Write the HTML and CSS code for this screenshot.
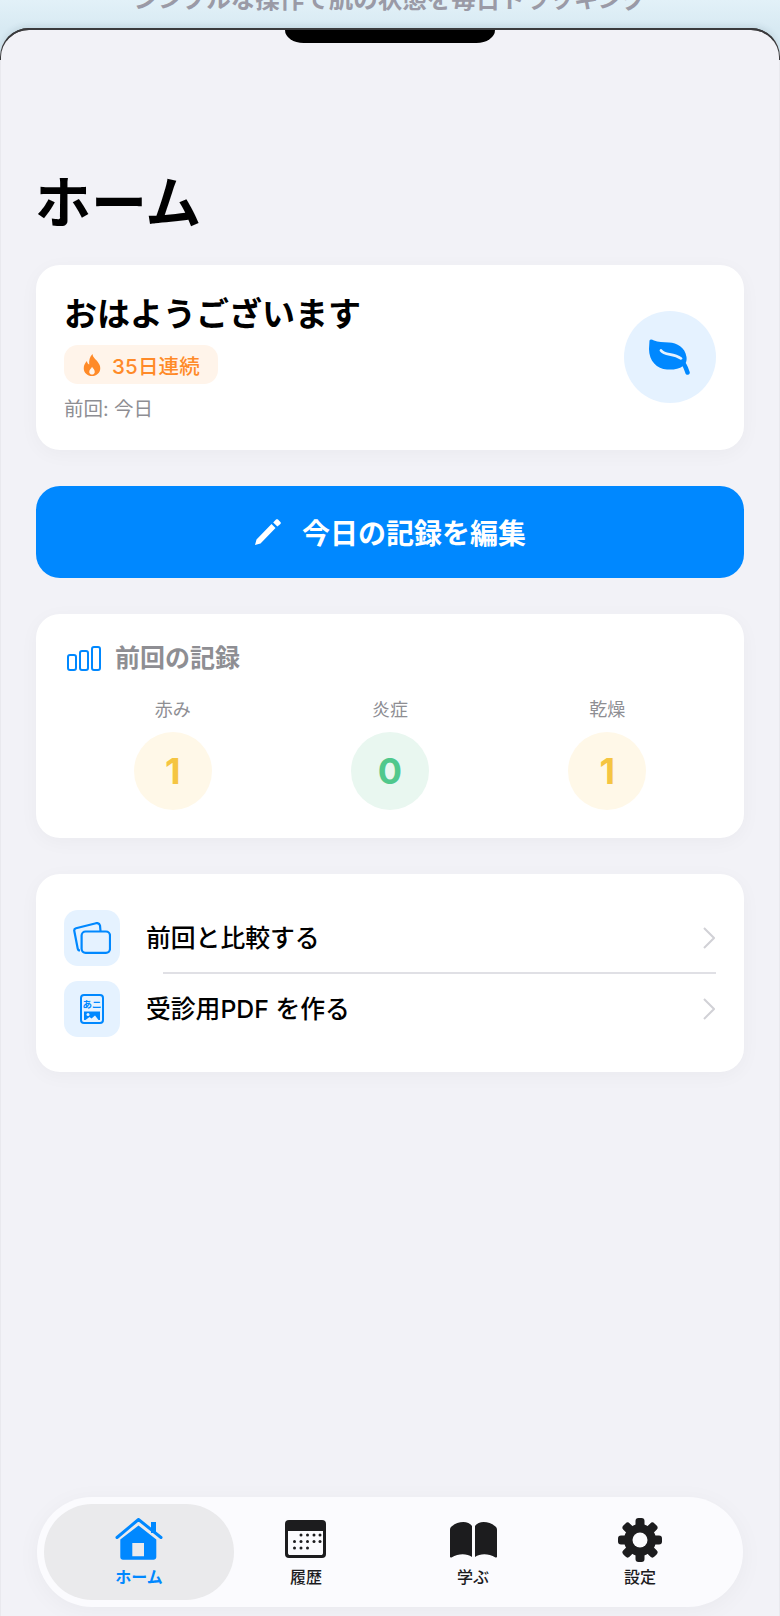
FILE: index.html
```html
<!DOCTYPE html>
<html lang="ja">
<head>
<meta charset="utf-8">
<title>ホーム</title>
<link rel="stylesheet" href="styles.css">
</head>
<body>
<div class="stage">
  <p class="caption">シンプルな操作で肌の状態を毎日トラッキング</p>
  <div class="phone">
    <div class="notch"></div>
    <h1 class="page-title">ホーム</h1>
    <main class="content">
      <section class="card greeting">
        <div class="greeting-text">
          <h2 class="greeting-title">おはようございます</h2>
          <div class="streak">
            <svg class="streak-icon" viewBox="0 0 18 24"><path fill="#FF8A28" fill-rule="evenodd" d="M9.500 0C10 4 13 5.500 15.500 9C17 11 18 13 18 15.500C18 20.500 14 24 9 24C4 24 0 20.500 0 15.500C0 12 1.500 9.500 3.500 7.500C3.700 9.500 4.500 10.800 6 11.500C5.500 7 6.500 3 9.500 0ZM9 14C8.500 16 6 17 6 19.500C6 21.200 7.300 22.300 9 22.300C10.700 22.300 12 21.200 12 19.500C12 17 10 16 9 14Z"/></svg>
            <span class="streak-text">35日連続</span>
          </div>
          <p class="last-visit">前回: 今日</p>
        </div>
        <div class="leaf-badge">
          <svg class="leaf-icon" viewBox="0 0 42 36">
            <path fill="#0088FF" d="M.5 1.500C1.500-.2 3 .6 5 1.400C9 3 14 3 20 3.500C28 4 36 8 37.500 18C38 22 37 25 34 27C30 30 24 31 18 30.500C8 30 0 22 0 10Z"/>
            <path fill="none" stroke="#E5F2FF" stroke-width="2.800" stroke-linecap="round" d="M12 11.500C16 17 24 13.500 32 19.500"/>
            <path fill="none" stroke="#0088FF" stroke-width="4.500" stroke-linecap="round" d="M33 23C36 25.500 37 29 38.500 33.500"/>
          </svg>
        </div>
      </section>

      <button class="primary-action" type="button">
        <svg class="pencil-icon" viewBox="0 0 28 28"><path fill="#fff" d="M1 27L2.500 21.500L17.500 6L21.500 10L6.500 25.500ZM19.200 4.400L22 1.600C22.600 1 23.400 1 24 1.600L26.400 4C27 4.600 27 5.400 26.400 6L23.400 8.600Z"/></svg>
        <span>今日の記録を編集</span>
      </button>

      <section class="card record">
        <header class="record-head">
          <svg class="bars-icon" viewBox="0 0 34 25" fill="none" stroke="#0088FF" stroke-width="2"><rect x="1" y="9" width="8" height="15" rx="2"/><rect x="13" y="5" width="8" height="19" rx="2"/><rect x="25" y="1" width="8" height="23" rx="2"/></svg>
          <h3 class="record-title">前回の記録</h3>
        </header>
        <div class="metrics">
          <div class="metric">
            <span class="metric-label">赤み</span>
            <span class="metric-value level-mid">1</span>
          </div>
          <div class="metric">
            <span class="metric-label">炎症</span>
            <span class="metric-value level-low">0</span>
          </div>
          <div class="metric">
            <span class="metric-label">乾燥</span>
            <span class="metric-value level-mid">1</span>
          </div>
        </div>
      </section>

      <section class="card links">
        <a class="link-row">
          <span class="link-tile">
            <svg class="link-icon" viewBox="0 0 38 32" fill="none" stroke="#0088FF" stroke-width="2.200"><path d="M7 28.500C5.500 28.500 5 28 4.700 26.500L1.300 9C1 7.500 1.800 6.500 3 6.200L23 1.200C25 .8 26.500 1.500 27 3.500L27.500 9"/><rect x="8.600" y="9.500" width="28.400" height="21.300" rx="4"/></svg>
          </span>
          <span class="link-label">前回と比較する</span>
          <svg class="chevron" viewBox="0 0 12 22" fill="none" stroke="#D1D1D6" stroke-width="2"><path d="M1 1l10 10L1 21"/></svg>
        </a>
        <div class="link-divider"></div>
        <a class="link-row">
          <span class="link-tile">
            <svg class="doc-icon" viewBox="0 0 24 30">
              <rect x="1" y="1" width="22" height="28" rx="3" fill="none" stroke="#0088FF" stroke-width="2"/>
              <text class="doc-text" x="12" y="14">あニ</text>
              <path fill="#0088FF" d="M4 17.500h16V26H4z"/>
              <circle cx="8" cy="20.500" r="1.500" fill="#E5F2FF"/>
              <path fill="#E5F2FF" d="M5.500 26l4-3 2 1.500 3.500-3 3.500 4.500z"/>
            </svg>
          </span>
          <span class="link-label">受診用PDF を作る</span>
          <svg class="chevron" viewBox="0 0 12 22" fill="none" stroke="#D1D1D6" stroke-width="2"><path d="M1 1l10 10L1 21"/></svg>
        </a>
      </section>
    </main>

    <nav class="tabbar">
      <a class="tab tab-active">
        <svg class="tab-icon home-icon" viewBox="0 0 48 44">
          <path fill="#0088FF" fill-rule="evenodd" d="M23.500 7.500L41.300 21.500V39C41.300 40.700 40 41.800 38.500 41.800H8C6.500 41.800 5.300 40.700 5.300 39V21.500ZM17.300 25V38.300H29V25Z"/>
          <path fill="none" stroke="#0088FF" stroke-width="3" stroke-linecap="round" stroke-linejoin="round" d="M2 19.500L23.500 1.500L46 19.500"/>
          <rect x="36" y="4" width="5" height="11" fill="#0088FF"/>
        </svg>
        <span class="tab-label">ホーム</span>
      </a>
      <a class="tab">
        <svg class="tab-icon calendar-icon" viewBox="0 0 41 38">
          <rect width="41" height="38" rx="4" fill="#1C1C1E"/>
          <path fill="#FBFBFE" d="M3 11H38V33C38 34.500 37 35 36 35H5C4 35 3 34.500 3 33Z"/>
          <g fill="#1C1C1E">
            <circle cx="16" cy="15" r="1.500"/><circle cx="22.500" cy="15" r="1.500"/><circle cx="29" cy="15" r="1.500"/><circle cx="35" cy="15" r="1.500"/>
            <circle cx="9.500" cy="21.500" r="1.500"/><circle cx="16" cy="21.500" r="1.500"/><circle cx="22.500" cy="21.500" r="1.500"/><circle cx="29" cy="21.500" r="1.500"/><circle cx="35" cy="21.500" r="1.500"/>
            <circle cx="9.500" cy="28" r="1.500"/><circle cx="16" cy="28" r="1.500"/><circle cx="22.500" cy="28" r="1.500"/>
          </g>
        </svg>
        <span class="tab-label">履歴</span>
      </a>
      <a class="tab">
        <svg class="tab-icon book-icon" viewBox="0 0 47 37"><path fill="#1C1C1E" d="M22 5V36C17 32.500 9 32 1.500 36.500C.7 36.800 0 36.300 0 35.500V9C0 7.500.4 6.500 1.500 5.500C7 .5 18-1 22 5ZM25 5V36C30 32.500 38 32 45.500 36.500C46.300 36.800 47 36.300 47 35.500V9C47 7.500 46.600 6.500 45.500 5.500C40 .5 29-1 25 5Z"/></svg>
        <span class="tab-label">学ぶ</span>
      </a>
      <a class="tab">
        <svg class="tab-icon gear-icon" viewBox="0 0 44 44">
          <g fill="#1C1C1E">
            <circle cx="22" cy="22" r="16"/>
            <rect x="17.500" y="0" width="9" height="44" rx="3"/>
            <rect x="17.500" y="0" width="9" height="44" rx="3" transform="rotate(45 22 22)"/>
            <rect x="17.500" y="0" width="9" height="44" rx="3" transform="rotate(90 22 22)"/>
            <rect x="17.500" y="0" width="9" height="44" rx="3" transform="rotate(135 22 22)"/>
          </g>
          <circle cx="22" cy="22" r="7.500" fill="#FBFBFE"/>
        </svg>
        <span class="tab-label">設定</span>
      </a>
    </nav>
  </div>
</div>
</body>
</html>
```
FILE: styles.css
```css
* { box-sizing: border-box; }

html, body {
  margin: 0;
  height: 1616px;
  overflow: hidden;
}

body {
  font-family: Inter, "Noto Sans CJK JP", sans-serif;
  color: #000;
  background: #fff;
}

.stage {
  height: 1616px;
  display: flex;
  flex-direction: column;
  overflow: hidden;
  background: linear-gradient(180deg, #E2F1F8 0, #D8EAF3 28px, #D8EAF3 100%);
}

.caption {
  margin: -17px 0 0;
  height: 45px;
  flex: none;
  text-align: center;
  font-size: 24.500px;
  line-height: 32px;
  font-weight: 700;
  color: #9A9AA6;
}

.phone {
  flex: 1;
  display: flex;
  flex-direction: column;
  position: relative;
  padding: 141px 35px 9px;
  background: #F2F2F7;
  border: 1px solid #E9E9EE;
  border-top: 2px solid #3A3A3C;
  border-bottom: 0;
  border-radius: 29px 29px 0 0;
  box-shadow: 0 -2px 6px rgba(40, 70, 90, .12);
}

.phone::before,
.phone::after {
  content: "";
  position: absolute;
  top: -2px;
  width: 30px;
  height: 30px;
  border-top: 2px solid #3A3A3C;
}

.phone::before {
  left: -1px;
  border-left: 1.500px solid #3A3A3C;
  border-top-left-radius: 29px;
}

.phone::after {
  right: -1px;
  border-right: 1.500px solid #3A3A3C;
  border-top-right-radius: 29px;
}

.notch {
  position: absolute;
  top: 0;
  left: 284px;
  width: 210px;
  height: 13px;
  background: #000;
  border-radius: 0 0 20px 20px / 0 0 14px 14px;
}

.page-title {
  margin: 0 0 30px -1px;
  font-size: 56px;
  line-height: 64px;
  font-weight: 700;
}

.content {
  display: flex;
  flex-direction: column;
  gap: 36px;
}

.card {
  background: #fff;
  border-radius: 24px;
  box-shadow: 0 4px 20px rgba(0, 0, 0, .035);
}

.greeting {
  height: 185px;
  padding: 26px 28px 0;
  display: flex;
  justify-content: space-between;
}

.greeting-title {
  margin: 0 0 8px;
  font-size: 33px;
  line-height: 46px;
  font-weight: 600;
}

.streak {
  display: inline-flex;
  align-items: center;
  gap: 11px;
  height: 39px;
  width: 154px;
  padding-left: 19px;
  border-radius: 14px;
  background: #FFF4EA;
}

.streak-icon {
  width: 18px;
  height: 22px;
}

.streak-text {
  font-size: 20.500px;
  letter-spacing: .2px;
  font-weight: 500;
  color: #FF8A28;
}

.last-visit {
  margin: 12px 0 0;
  font-size: 19.500px;
  line-height: 26px;
  color: #8E8E93;
}

.leaf-badge {
  width: 92px;
  height: 92px;
  margin-top: 20px;
  border-radius: 50%;
  background: #E5F2FF;
  display: flex;
  align-items: center;
  justify-content: center;
}

.leaf-icon {
  width: 42px;
  height: 36px;
}

.primary-action {
  height: 92px;
  border: 0;
  border-radius: 24px;
  background: #0088FF;
  display: flex;
  align-items: center;
  justify-content: center;
  gap: 20px;
  font: inherit;
  font-size: 28px;
  font-weight: 600;
  color: #fff;
}

.pencil-icon {
  width: 28px;
  height: 28px;
}

.record {
  height: 224px;
  padding: 26px 28px 0;
}

.record-head {
  display: flex;
  align-items: center;
  gap: 14px;
  height: 36px;
}

.bars-icon {
  width: 34px;
  height: 25px;
  margin-left: 3px;
}

.record-title {
  margin: 0;
  font-size: 25px;
  line-height: 36px;
  font-weight: 700;
  color: #8E8E93;
}

.metrics {
  display: grid;
  grid-template-columns: repeat(3, 1fr);
  margin-top: 22px;
}

.metric {
  display: flex;
  flex-direction: column;
  align-items: center;
}

.metric-label {
  font-size: 18px;
  line-height: 24px;
  color: #8E8E93;
}

.metric-value {
  width: 78px;
  height: 78px;
  margin-top: 10px;
  border-radius: 50%;
  display: flex;
  align-items: center;
  justify-content: center;
  font-size: 36px;
  font-weight: 700;
}

.level-mid {
  background: #FFF8E8;
  color: #F5C542;
}

.level-low {
  background: #E9F7F0;
  color: #50C88C;
}

.links {
  height: 198px;
  padding: 35px 29px 0 28px;
}

.link-row {
  display: flex;
  align-items: center;
  height: 57px;
}

.link-tile {
  width: 56px;
  height: 56px;
  border-radius: 14px;
  background: #E5F2FF;
  display: flex;
  align-items: center;
  justify-content: center;
  flex: none;
}

.link-icon {
  width: 38px;
  height: 32px;
}

.doc-icon {
  width: 24px;
  height: 30px;
}

.doc-text {
  font-size: 9.500px;
  font-weight: 700;
  fill: #0088FF;
  text-anchor: middle;
}

.link-label {
  flex: 1;
  margin-left: 26px;
  font-size: 24.800px;
  line-height: 34px;
  font-weight: 500;
}

.chevron {
  width: 12px;
  height: 22px;
}

.link-divider {
  height: 1.500px;
  margin: 6px -1px 7px 99px;
  background: #E0E0E5;
}

.tabbar {
  margin-top: auto;
  align-self: center;
  width: 706px;
  height: 110px;
  padding: 7px 0 7px 18.500px;
  display: grid;
  grid-template-columns: repeat(4, 167px);
  background: #FBFBFE;
  border-radius: 55px;
  box-shadow: 0 4px 24px rgba(0, 0, 0, .04);
}

.tab {
  display: flex;
  flex-direction: column;
  align-items: center;
  padding-top: 14px;
  color: #1C1C1E;
}

.tab-active {
  margin: 0 -11.500px;
  background: #EAEAEC;
  border-radius: 48px;
  color: #0088FF;
}

.tab-icon {
  flex: none;
  height: 44px;
}

.home-icon { width: 48px; }
.calendar-icon { width: 41px; height: 38px; margin: 2px 2px 4px 0; }
.book-icon { width: 47px; height: 37px; margin-top: 3px; margin-bottom: 4px; }
.gear-icon { width: 44px; }

.tab-label {
  margin-top: 3px;
  font-size: 16px;
  line-height: 24px;
  font-weight: 500;
}

.tab-active .tab-label {
  font-weight: 600;
}
```
